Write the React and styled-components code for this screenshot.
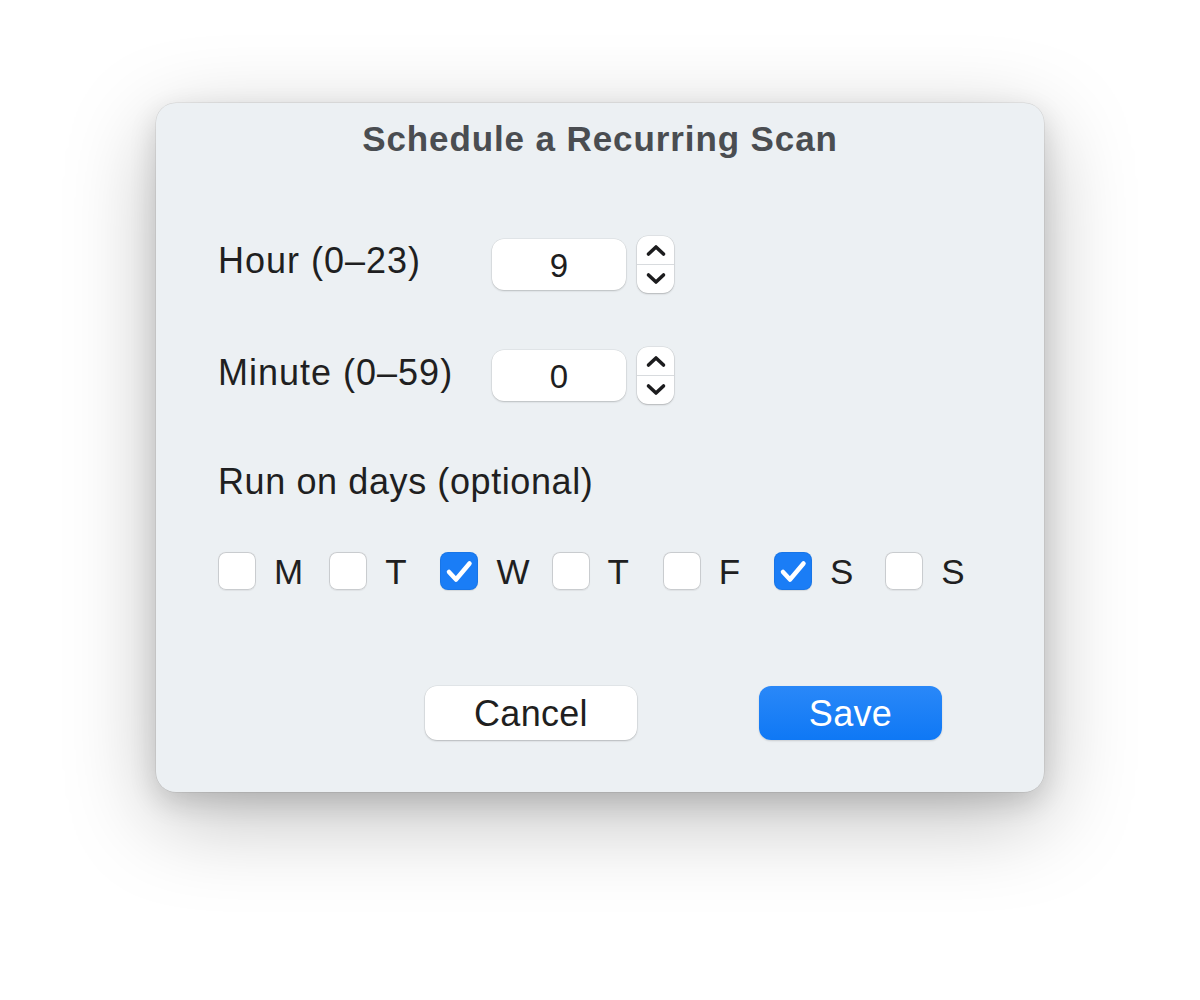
import React, { useState } from "react";
import styled, { createGlobalStyle } from "styled-components";

const Global = createGlobalStyle`
  html, body { margin: 0; padding: 0; background: #ffffff; }
  body { font-family: "Liberation Sans", Arial, sans-serif; -webkit-font-smoothing: antialiased; }
  * { box-sizing: border-box; }
`;

const Page = styled.div`
  width: 1200px;
  height: 1000px;
  display: flex;
  justify-content: center;
  align-items: flex-start;
  padding-top: 103px;
`;

const Dialog = styled.div`
  width: 888px;
  height: 689px;
  background: #ecf0f3;
  border-radius: 20px;
  box-shadow: 0 26px 90px rgba(0, 0, 0, 0.26), 0 10px 28px rgba(0, 0, 0, 0.14),
    0 0 0 0.5px rgba(0, 0, 0, 0.12);
  display: flex;
  flex-direction: column;
  padding: 16px 0 52px 62px;
`;

const Title = styled.h1`
  margin: 0 62px 0 0;
  font-size: 35px;
  line-height: 40px;
  font-weight: 700;
  letter-spacing: 0.9px;
  color: #4a4d51;
  text-align: center;
`;

const Form = styled.div`
  display: flex;
  flex-direction: column;
  gap: 54px;
  margin-top: 77px;
`;

const Row = styled.div`
  display: grid;
  grid-template-columns: 274px auto auto;
  align-items: center;
  justify-content: start;
  height: 57px;
`;

const Label = styled.div`
  font-size: 36px;
  line-height: 40px;
  letter-spacing: ${(p) => p.$ls ?? 0.6}px;
  color: #1f1f21;
  margin-bottom: ${(p) => p.$lift || 0}px;
`;

const Field = styled.div`
  width: 134px;
  height: 51px;
  background: #ffffff;
  border-radius: 12px;
  box-shadow: 0 1px 2px rgba(0, 0, 0, 0.18), 0 0 0 0.5px rgba(0, 0, 0, 0.08);
  display: flex;
  align-items: center;
  justify-content: center;
  font-size: 33px;
  color: #1e1e20;
  padding-top: 2px;
`;

const Stepper = styled.div`
  margin-left: 11px;
  width: 37px;
  height: 57px;
  background: #ffffff;
  border-radius: 11px;
  box-shadow: 0 1px 2px rgba(0, 0, 0, 0.2), 0 0 0 0.5px rgba(0, 0, 0, 0.1);
  display: flex;
  flex-direction: column;
`;

const StepHalf = styled.div`
  flex: 1;
  display: flex;
  align-items: center;
  justify-content: center;
  border-top: ${(p) => (p.$bottom ? "1px solid #d8dbde" : "none")};
`;

const Chevron = ({ up }) => (
  <svg width="22" height="14" viewBox="0 0 22 14">
    <path
      d={up ? "M3.5 11 L11 4 L18.5 11" : "M3.5 3 L11 10 L18.5 3"}
      fill="none"
      stroke="#1c1c1e"
      strokeWidth="3.6"
      strokeLinecap="round"
      strokeLinejoin="round"
    />
  </svg>
);

const DaysTitle = styled(Label)`
  margin-top: 58px;
`;

const Days = styled.div`
  display: flex;
  margin-top: 50px;
  height: 38px;
  align-items: center;
`;

const Day = styled.label`
  width: 111.2px;
  display: flex;
  align-items: center;
  gap: 18px;
  cursor: pointer;
`;

const Box = styled.span`
  width: 38px;
  height: 38px;
  border-radius: 8px;
  flex: none;
  display: flex;
  align-items: center;
  justify-content: center;
  background: ${(p) => (p.$on ? "#1a7df6" : "#ffffff")};
  box-shadow: ${(p) =>
    p.$on
      ? "inset 0 0 0 1px rgba(0,0,0,0.06), 0 1px 1px rgba(0,0,0,0.1)"
      : "inset 0 0 0 1px #c9cccf, 0 0.5px 1px rgba(0,0,0,0.06)"};
`;

const DayLetter = styled.span`
  font-size: 35px;
  line-height: 40px;
  color: #1f1f21;
  padding-top: 2px;
`;

const Buttons = styled.div`
  display: flex;
  justify-content: flex-end;
  gap: 122px;
  padding-right: 102px;
  margin-top: auto;
`;

const Button = styled.button`
  height: 54px;
  width: ${(p) => p.$w}px;
  border: none;
  border-radius: 12px;
  font-family: "Liberation Sans", Arial, sans-serif;
  font-size: 36px;
  letter-spacing: 0.3px;
  padding: 2px 0 0;
  cursor: pointer;
  color: ${(p) => (p.$primary ? "#ffffff" : "#1f1f21")};
  background: ${(p) =>
    p.$primary ? "linear-gradient(#2a88f8, #0f78f5)" : "#ffffff"};
  box-shadow: ${(p) =>
    p.$primary
      ? "0 1px 2px rgba(0,0,0,0.15)"
      : "0 1px 2px rgba(0,0,0,0.2), 0 0 0 0.5px rgba(0,0,0,0.08)"};
`;

const days = ["M", "T", "W", "T", "F", "S", "S"];

export default function App() {
  const [sel, setSel] = useState([false, false, true, false, false, true, false]);
  return (
    <Page>
      <Global />
      <Dialog>
        <Title>Schedule a Recurring Scan</Title>
        <Form>
          <Row>
            <Label $lift={8} $ls={1}>Hour (0–23)</Label>
            <Field>9</Field>
            <Stepper>
              <StepHalf><Chevron up /></StepHalf>
              <StepHalf $bottom><Chevron /></StepHalf>
            </Stepper>
          </Row>
          <Row>
            <Label $lift={6} $ls={1}>Minute (0–59)</Label>
            <Field>0</Field>
            <Stepper>
              <StepHalf><Chevron up /></StepHalf>
              <StepHalf $bottom><Chevron /></StepHalf>
            </Stepper>
          </Row>
        </Form>
        <DaysTitle>Run on days (optional)</DaysTitle>
        <Days>
          {days.map((d, i) => (
            <Day
              key={i}
              onClick={() => setSel((s) => s.map((v, j) => (j === i ? !v : v)))}
            >
              <Box $on={sel[i]}>
                {sel[i] && (
                  <svg width="38" height="38" viewBox="0 0 38 38">
                    <path
                      d="M9 20 L16 27.5 L29.5 11.5"
                      fill="none"
                      stroke="#fff"
                      strokeWidth="4.5"
                      strokeLinecap="round"
                      strokeLinejoin="round"
                    />
                  </svg>
                )}
              </Box>
              <DayLetter>{d}</DayLetter>
            </Day>
          ))}
        </Days>
        <Buttons>
          <Button $w={212}>Cancel</Button>
          <Button $w={183} $primary>Save</Button>
        </Buttons>
      </Dialog>
    </Page>
  );
}
